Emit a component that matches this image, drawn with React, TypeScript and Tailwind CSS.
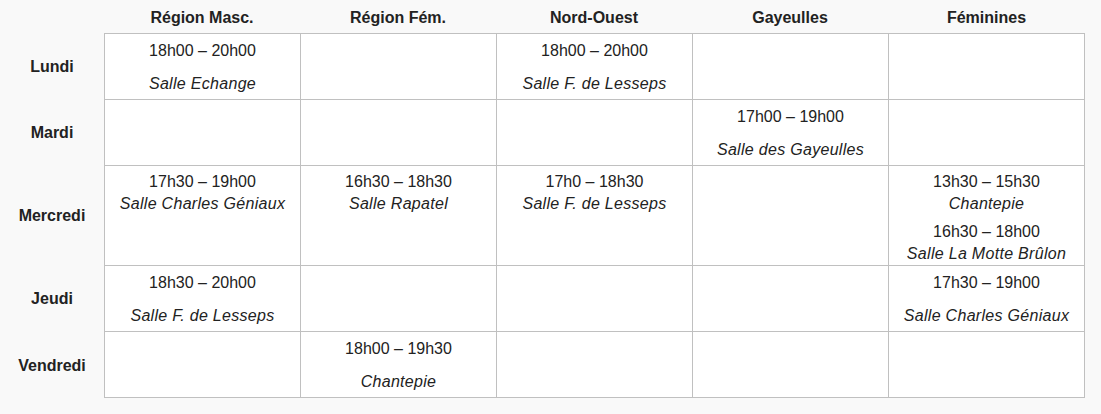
import React from "react";

type Entry = { time: string; place: string };
type Cell = { kind: "spread"; e: Entry } | { kind: "tight"; e: Entry[] } | null;

const cols = ["Région Masc.", "Région Fém.", "Nord-Ouest", "Gayeulles", "Féminines"];

const rows: { day: string; h: string; cells: Cell[] }[] = [
  {
    day: "Lundi",
    h: "h-[66px]",
    cells: [
      { kind: "spread", e: { time: "18h00 – 20h00", place: "Salle Echange" } },
      null,
      { kind: "spread", e: { time: "18h00 – 20h00", place: "Salle F. de Lesseps" } },
      null,
      null,
    ],
  },
  {
    day: "Mardi",
    h: "h-[66px]",
    cells: [null, null, null, { kind: "spread", e: { time: "17h00 – 19h00", place: "Salle des Gayeulles" } }, null],
  },
  {
    day: "Mercredi",
    h: "h-[100px]",
    cells: [
      { kind: "tight", e: [{ time: "17h30 – 19h00", place: "Salle Charles Géniaux" }] },
      { kind: "tight", e: [{ time: "16h30 – 18h30", place: "Salle Rapatel" }] },
      { kind: "tight", e: [{ time: "17h0 – 18h30", place: "Salle F. de Lesseps" }] },
      null,
      {
        kind: "tight",
        e: [
          { time: "13h30 – 15h30", place: "Chantepie" },
          { time: "16h30 – 18h00", place: "Salle La Motte Brûlon" },
        ],
      },
    ],
  },
  {
    day: "Jeudi",
    h: "h-[66px]",
    cells: [
      { kind: "spread", e: { time: "18h30 – 20h00", place: "Salle F. de Lesseps" } },
      null,
      null,
      null,
      { kind: "spread", e: { time: "17h30 – 19h00", place: "Salle Charles Géniaux" } },
    ],
  },
  {
    day: "Vendredi",
    h: "h-[67px]",
    cells: [null, { kind: "spread", e: { time: "18h00 – 19h30", place: "Chantepie" } }, null, null, null],
  },
];

function CellContent({ c }: { c: Cell }) {
  if (!c) return null;
  if (c.kind === "spread") {
    return (
      <div className="flex flex-col items-center pt-[6px] gap-[11px]">
        <span>{c.e.time}</span>
        <span className="italic tracking-[0.3px]">{c.e.place}</span>
      </div>
    );
  }
  return (
    <div className="flex flex-col items-center pt-[5px] gap-[6px]">
      {c.e.map((x, i) => (
        <div key={i} className="flex flex-col items-center">
          <span>{x.time}</span>
          <span className="italic tracking-[0.3px]">{x.place}</span>
        </div>
      ))}
    </div>
  );
}

export default function App() {
  return (
    <div
      className="w-[1101px] h-[414px] bg-[#f9f9f9] text-[#222222] text-[16px] leading-[22px]"
      style={{ fontFamily: '"Liberation Sans", Arial, sans-serif' }}
    >
      <div className="grid grid-cols-[104px_196px_196px_196px_196px_197px]">
        <div className="h-[33px]" />
        {cols.map((c) => (
          <div key={c} className="h-[33px] flex items-center justify-center font-bold pt-[2px]">
            {c}
          </div>
        ))}
        {rows.map((r, ri) => (
          <React.Fragment key={r.day}>
            <div className={`${r.h} flex items-center justify-center font-bold pt-[2px]`}>{r.day}</div>
            {r.cells.map((c, ci) => (
              <div
                key={ci}
                className={`${r.h} bg-white border-l border-t border-[#c0c0c0] text-center ${
                  ci === 4 ? "border-r" : ""
                } ${ri === rows.length - 1 ? "border-b" : ""}`}
              >
                <CellContent c={c} />
              </div>
            ))}
          </React.Fragment>
        ))}
      </div>
    </div>
  );
}
